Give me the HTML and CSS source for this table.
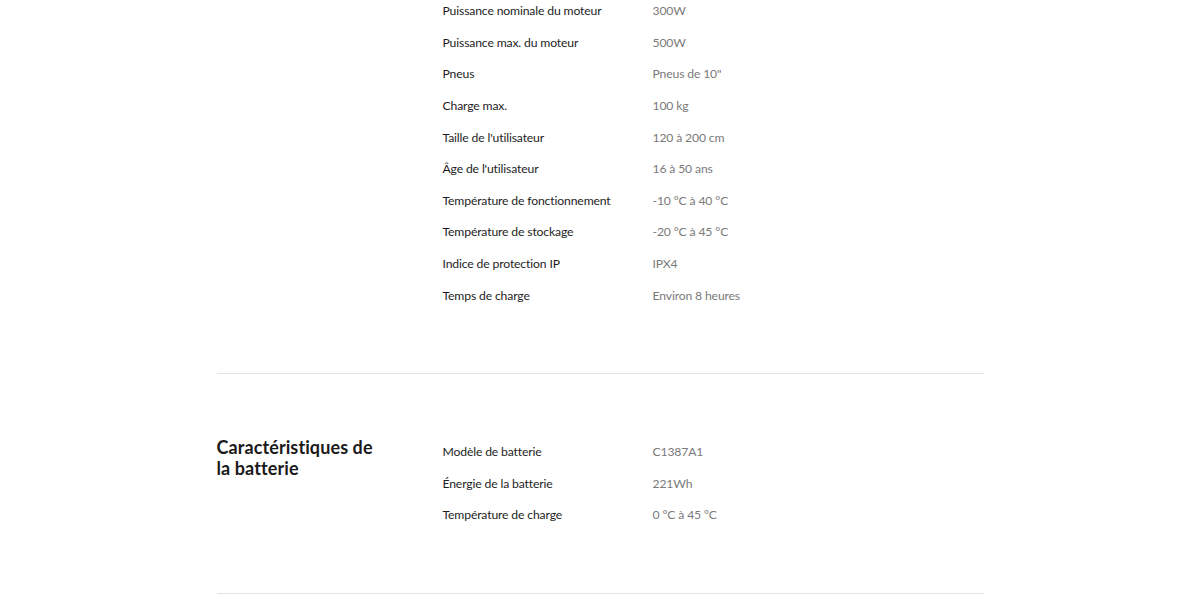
FILE: index.html
```html
<html>
<head>
<meta charset="utf-8">
<link rel="stylesheet" href="styles.css">
</head>
<body>
<div class="wrapper">
  <section class="spec spec--first">
    <div class="spec__title"></div>
    <ul class="spec__list">
      <li><span class="spec__label">Puissance nominale du moteur</span><span class="spec__value">300W</span></li>
      <li><span class="spec__label">Puissance max. du moteur</span><span class="spec__value">500W</span></li>
      <li><span class="spec__label">Pneus</span><span class="spec__value">Pneus de 10"</span></li>
      <li><span class="spec__label">Charge max.</span><span class="spec__value">100 kg</span></li>
      <li><span class="spec__label">Taille de l'utilisateur</span><span class="spec__value">120 à 200 cm</span></li>
      <li><span class="spec__label">Âge de l'utilisateur</span><span class="spec__value">16 à 50 ans</span></li>
      <li><span class="spec__label">Température de fonctionnement</span><span class="spec__value">-10 °C à 40 °C</span></li>
      <li><span class="spec__label">Température de stockage</span><span class="spec__value">-20 °C à 45 °C</span></li>
      <li><span class="spec__label">Indice de protection IP</span><span class="spec__value">IPX4</span></li>
      <li><span class="spec__label">Temps de charge</span><span class="spec__value">Environ 8 heures</span></li>
    </ul>
  </section>
  <section class="spec">
    <h2 class="spec__title">Caractéristiques de la batterie</h2>
    <ul class="spec__list">
      <li><span class="spec__label">Modèle de batterie</span><span class="spec__value">C1387A1</span></li>
      <li><span class="spec__label">Énergie de la batterie</span><span class="spec__value">221Wh</span></li>
      <li><span class="spec__label">Température de charge</span><span class="spec__value">0 °C à 45 °C</span></li>
    </ul>
  </section>
</div>
</body>
</html>
```

FILE: styles.css
```css
/* reset */
* {
  padding: 0;
  margin: 0;
  box-sizing: border-box;
}

body {
  background-color: #fff;
  font-family: Lato, "Noto Sans", sans-serif;
  color: #222;
}

.wrapper {
  width: 767px;
  margin: 0 auto;
}

.spec {
  display: flex;
  padding: 62px 0;
  border-bottom: 1px solid #e3e3e3;
}

.spec--first {
  padding-top: 0;
  margin-top: -5px;
}

.spec__title {
  width: 226px;
  flex-shrink: 0;
  padding-right: 60px;
  padding-top: 1px;
  font-size: 18px;
  font-weight: 700;
  line-height: 21px;
  letter-spacing: 0.1px;
  color: #1a1a1a;
}

.spec__list {
  list-style: none;
  flex: 1;
}

.spec__list li {
  display: flex;
  height: 31.6px;
  align-items: center;
  font-size: 12.2px;
  letter-spacing: -0.15px;
}

.spec__label {
  width: 210px;
  flex-shrink: 0;
  color: #1e1e1e;
}

.spec__value {
  color: #7a7a7a;
}
```
